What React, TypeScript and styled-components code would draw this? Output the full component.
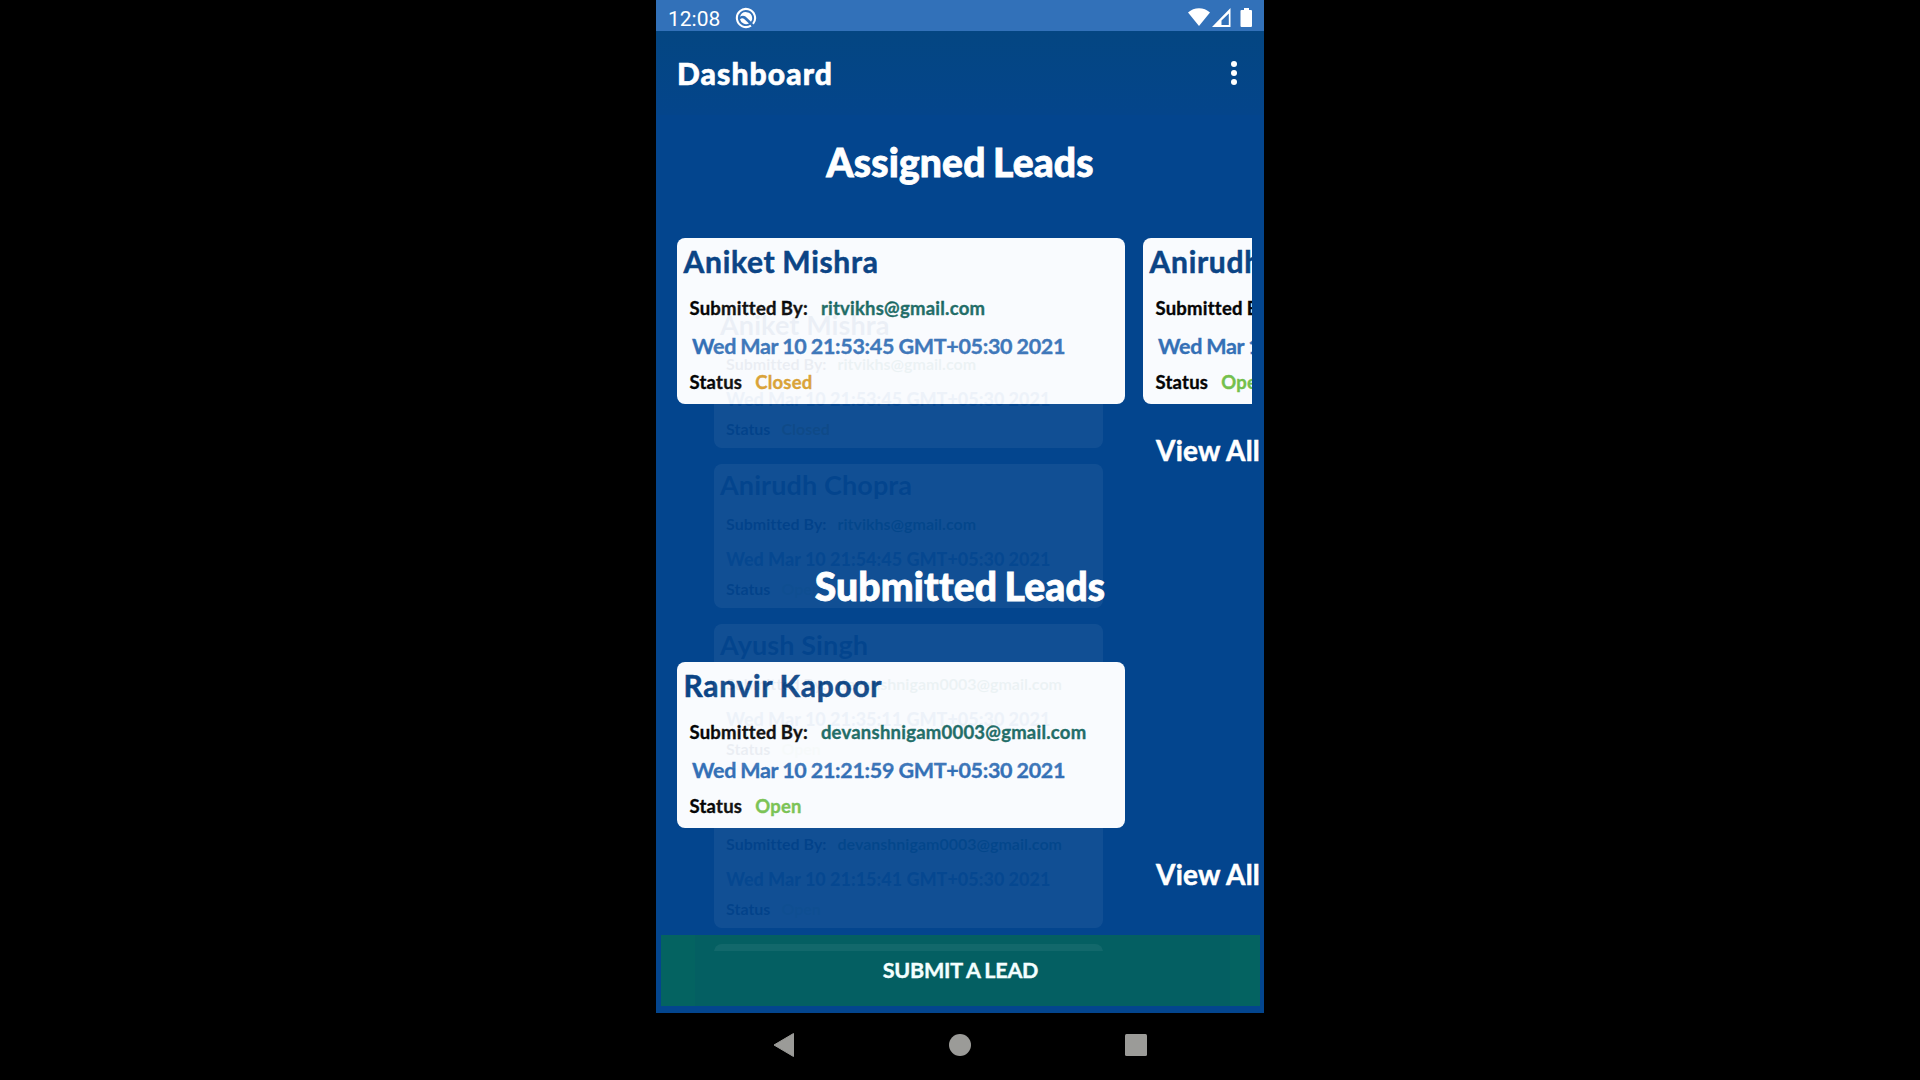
import React from "react";
import styled, { createGlobalStyle } from "styled-components";

const Global = createGlobalStyle`
  *{box-sizing:border-box}
  html,body{margin:0;padding:0;background:#000;overflow:hidden}
  body{font-family:Lato,"Open Sans",sans-serif;font-variant-ligatures:none}
`;
const Stage = styled.div`
  width: 1920px; height: 1080px; background: #000;
  display: flex; justify-content: center;
`;
const Phone = styled.div`
  width: 608px; height: 1080px; display: flex; flex-direction: column;
`;
const Screen = styled.div`
  position: relative; height: 1013px; background: #03458e;
  display: flex; flex-direction: column; overflow: hidden;
`;
const StatusBar = styled.div`
  height: 31px; flex: none; background: #3271b9; color: #fff;
  display: flex; align-items: center; padding: 5px 10px 0 12px;
  font: 400 21px/26px Roboto, sans-serif;
  svg { display: block; }
`;
const Clock = styled.span`width: 67px; padding-top: 1px;`;
const StatusIcons = styled.div`
  margin-left: auto; display: flex; align-items: center;
`;
const AppBar = styled.div`
  height: 84px; flex: none; display: flex; align-items: center; justify-content: space-between;
  padding: 0 27px 1px 21px; color: #fff;
  background: linear-gradient(#044682, #04458b);
`;
const AppTitle = styled.h1`
  margin: 0; font-size: 30px; font-weight: 900; line-height: 36px;
  letter-spacing: 1.1px; -webkit-text-stroke: 0.6px currentColor;
`;
const Dots = styled.div`
  display: flex; flex-direction: column; gap: 3px;
  i { width: 6px; height: 6px; border-radius: 50%; background: #fff; }
`;
const Section = styled.section<{ $height: number }>`height: ${p => p.$height}px; flex: none;`;
const SectionTitle = styled.h2`
  margin: 0; height: 96px; line-height: 95px; text-align: center;
  font-size: 39px; font-weight: 900; color: #fff; -webkit-text-stroke: 0.8px currentColor;
  letter-spacing: 0.15px; word-spacing: -2px;
`;
const Cards = styled.div`
  margin: 27px 12px 0 21px; display: flex; gap: 18px; overflow: hidden;
`;
const Card = styled.article`
  width: 448px; height: 166px; flex: none; background: #f9fbfe; border-radius: 8px;
  padding: 5px 0 0 6.5px; white-space: nowrap;
`;
const Name = styled.h3`
  margin: 0; font-size: 30px; line-height: 36px; font-weight: 700; color: #0b4485;
  letter-spacing: 0.7px; word-spacing: -1px; -webkit-text-stroke: 0.5px currentColor;
`;
const Field = styled.div<{ $top: number }>`
  display: flex; gap: 13px; margin: ${p => p.$top}px 0 0 6px;
  font-size: 18.5px; line-height: 24px; font-weight: 700; color: #050505;
  letter-spacing: 0.23px; word-spacing: -0.8px; -webkit-text-stroke: 0.35px currentColor;
`;
const Value = styled.span<{ $color: string }>`color: ${p => p.$color};`;
const When = styled.div`
  margin: 12px 0 0 8.5px; font-size: 21.5px; line-height: 28px; font-weight: 700; color: #3470b6;
  letter-spacing: -0.32px; word-spacing: -0.6px; -webkit-text-stroke: 0.35px currentColor;
`;
const ViewAll = styled.div`
  padding: 29px 4px 0 0; text-align: right; color: #fff;
  font-size: 28px; line-height: 34px; font-weight: 700;
  letter-spacing: 0.2px; -webkit-text-stroke: 0.5px currentColor;
`;
const Submit = styled.button`
  width: 599px; height: 71px; margin: auto auto 7px 5px; flex: none; border: 0; padding: 0;
  background: linear-gradient(90deg, #046361 0 34px, #045f62 34px 569px, #046361 569px);
  color: #f4ffff; font: 700 21.5px/71px Lato, sans-serif; text-align: center;
  letter-spacing: -0.25px; word-spacing: -0.5px; -webkit-text-stroke: 0.4px currentColor;
`;
const NavBar = styled.nav`
  height: 67px; display: flex; align-items: center; justify-content: center; gap: 154px; padding: 0 0 4px;
  svg { position: relative; left: -0.5px; }
`;

/* Previous screen's list, still fading out above the dashboard */
const Fading = styled.div`
  position: absolute; left: 58px; top: 304px; width: 389px; height: 647px; opacity: 0.055;
  display: flex; flex-direction: column; gap: 16px; overflow: hidden; pointer-events: none;
  font-weight: 700; color: #2c5088;
`;
const FadingCard = styled.div`
  height: 144px; flex: none; border-radius: 8px; background: #fff; padding: 4px 0 0 6px; white-space: nowrap;
`;
const FadingName = styled.div`font-size: 27px; line-height: 34px; letter-spacing: 0.1px; color: #0b3f80;`;
const FadingLine = styled.div<{ $top: number; $size?: number }>`
  display: flex; gap: 11px; margin: ${p => p.$top}px 0 0 6px; font-size: ${p => p.$size ?? 16}px; line-height: 22px;
  span:first-child { color: #001a4d; }
`;
const FadingValue = styled.span<{ $color: string }>`color: ${p => p.$color};`;

type Lead = { name: string; email: string; date: string; status: "Open" | "Closed" };
const assigned: Lead[] = [
  { name: "Aniket Mishra", email: "ritvikhs@gmail.com", date: "Wed Mar 10 21:53:45 GMT+05:30 2021", status: "Closed" },
  { name: "Anirudh Chopra", email: "ritvikhs@gmail.com", date: "Wed Mar 10 21:54:45 GMT+05:30 2021", status: "Open" },
];
const submitted: Lead[] = [
  { name: "Ranvir Kapoor", email: "devanshnigam0003@gmail.com", date: "Wed Mar 10 21:21:59 GMT+05:30 2021", status: "Open" },
];
const fading: Lead[] = [
  assigned[0],
  assigned[1],
  { name: "Ayush Singh", email: "devanshnigam0003@gmail.com", date: "Wed Mar 10 21:35:11 GMT+05:30 2021", status: "Open" },
  { name: "", email: "devanshnigam0003@gmail.com", date: "Wed Mar 10 21:15:41 GMT+05:30 2021", status: "Open" },
];

const LeadCard = ({ lead }: { lead: Lead }) => (
  <Card>
    <Name>{lead.name}</Name>
    <Field $top={17}><span>Submitted By:</span><Value $color="#14655f">{lead.email}</Value></Field>
    <When>{lead.date}</When>
    <Field $top={10}><span>Status</span><Value $color={lead.status === "Open" ? "#74c04c" : "#d89e2e"}>{lead.status}</Value></Field>
  </Card>
);

const LeadSection = ({ title, leads, height }: { title: string; leads: Lead[]; height: number }) => (
  <Section $height={height}>
    <SectionTitle>{title}</SectionTitle>
    <Cards>{leads.map(l => <LeadCard key={l.name} lead={l} />)}</Cards>
    <ViewAll>View All</ViewAll>
  </Section>
);

export default function App() {
  return (
    <Stage>
      <Global />
      <Phone>
        <Screen>
          <StatusBar>
            <Clock>12:08</Clock>
            <svg width="22" height="22" viewBox="0 0 22 22" fill="none" stroke="#fff">
              <path d="M18 16.800A9.100 9.100 0 1 0 16 18.600" strokeWidth="2.100" />
              <path d="M5 9.800A6.200 6.200 0 0 1 17.200 11c0 1.600-.5 2.800-1.200 3.800L10.500 9.500C9 8.300 6.500 8.300 5 9.800z" fill="#fff" stroke="none" />
              <path d="M5 12.300C6.200 11 8 11 9.200 12L14 16.400A6.200 6.200 0 0 1 5 12.300z" fill="#fff" stroke="none" />
            </svg>
            <StatusIcons>
              <svg width="66" height="20" viewBox="0 0 66 20" fill="#fff">
                <path d="M0 4.500C6-1.300 16-1.300 22 4.500L11 18z" />
                <path fillRule="evenodd" d="M42.500 0V19H24zM40.800 5.500V17H33.500V12.500z" />
                <path d="M56 0h5v2h2q1 0 1 1v15q0 1-1 1h-9.500q-1 0-1-1V3q0-1 1-1h2.500z" />
              </svg>
            </StatusIcons>
          </StatusBar>
          <AppBar><AppTitle>Dashboard</AppTitle><Dots><i /><i /><i /></Dots></AppBar>
          <LeadSection title="Assigned Leads" leads={assigned} height={424} />
          <LeadSection title="Submitted Leads" leads={submitted} height={396} />
          <Submit>SUBMIT A LEAD</Submit>
          <Fading aria-hidden>
            {fading.map((l, i) => (
              <FadingCard key={i}>
                <FadingName>{l.name || "\u00a0"}</FadingName>
                <FadingLine $top={11}><span>Submitted By:</span><FadingValue $color="#14655f">{l.email}</FadingValue></FadingLine>
                <FadingLine $top={13} $size={18}><FadingValue as="b" $color="#3470b6">{l.date}</FadingValue></FadingLine>
                <FadingLine $top={8}><span>Status</span><FadingValue $color={l.status === "Open" ? "#d0e8c4" : "#d89e2e"}>{l.status}</FadingValue></FadingLine>
              </FadingCard>
            ))}
            <FadingCard />
          </Fading>
        </Screen>
        <NavBar>
          <svg width="22" height="26" viewBox="0 0 22 26"><path d="M1 13 20.500 1.500V24.500Z" fill="#9b9b98" stroke="#9b9b98" strokeLinejoin="round" /></svg>
          <svg width="22" height="22"><circle cx="11" cy="11" r="11" fill="#9b9b98" /></svg>
          <svg width="22" height="22"><rect width="22" height="22" rx="1.500" fill="#9b9b98" /></svg>
        </NavBar>
      </Phone>
    </Stage>
  );
}
